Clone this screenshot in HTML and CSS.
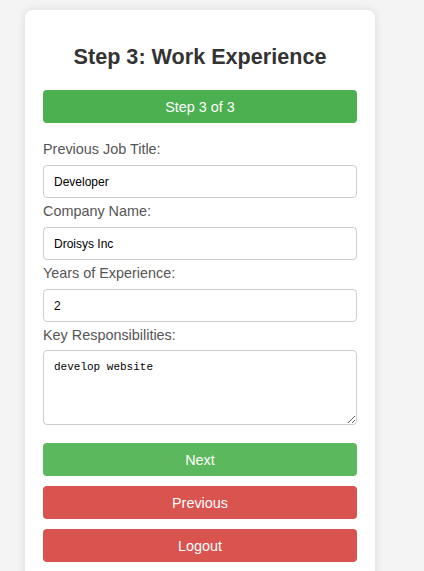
FILE: index.html
```html
<!DOCTYPE html>
<html lang="en">
<head>
<meta charset="utf-8">
<title>Step 3: Work Experience</title>
<link rel="stylesheet" href="styles.css">
</head>
<body>
<div class="card">
  <h2 class="title">Step 3: Work Experience</h2>
  <div class="progress">Step 3 of 3</div>
  <form class="form">
    <label class="label" for="job">Previous Job Title:</label>
    <input class="field" id="job" type="text" value="Developer">
    <label class="label" for="company">Company Name:</label>
    <input class="field" id="company" type="text" value="Droisys Inc">
    <label class="label" for="years">Years of Experience:</label>
    <input class="field" id="years" type="number" value="2">
    <label class="label" for="resp">Key Responsibilities:</label>
    <textarea class="area" id="resp">develop website</textarea>
    <button class="btn btn-next" type="button">Next</button>
    <button class="btn btn-danger" type="button">Previous</button>
    <button class="btn btn-danger" type="button">Logout</button>
  </form>
</div>
</body>
</html>
```
FILE: styles.css
```css
html, body {
  margin: 0;
  padding: 0;
  background: #f4f4f4;
  font-family: "Liberation Sans", Arial, sans-serif;
}

.card {
  box-sizing: border-box;
  width: 350px;
  margin: 10px 0 0 25px;
  padding: 18px 18px 20px;
  background: #ffffff;
  border-radius: 8px;
  box-shadow: 0 0 10px rgba(0, 0, 0, 0.1);
  min-height: 600px;
}

.title {
  margin: 16px 0 21px;
  font-size: 21.6px;
  line-height: 25px;
  font-weight: bold;
  color: #333333;
  text-align: center;
}

.progress {
  height: 33px;
  display: flex;
  align-items: center;
  justify-content: center;
  background: #4caf50;
  color: #ffffff;
  font-size: 14.4px;
  border-radius: 4px;
  margin-bottom: 18px;
}

.form {
  display: flex;
  flex-direction: column;
}

.label {
  display: block;
  font-size: 14.4px;
  line-height: 17px;
  color: #555555;
  margin-bottom: 7px;
}

.field {
  box-sizing: border-box;
  height: 33px;
  width: 100%;
  margin: 0 0 5px;
  padding: 0 10px;
  border: 1px solid #cccccc;
  border-radius: 4px;
  font-family: "Liberation Sans", Arial, sans-serif;
  font-size: 12px;
  color: #000000;
  background: #ffffff;
}

.area {
  box-sizing: border-box;
  height: 75px;
  width: 100%;
  margin: -1px 0 18px;
  padding: 10px;
  border: 1px solid #cccccc;
  border-radius: 4px;
  font-family: "Liberation Mono", monospace;
  font-size: 11px;
  line-height: 13px;
  color: #000000;
  background: #ffffff;
}

.btn {
  box-sizing: border-box;
  height: 33px;
  width: 100%;
  margin: 0 0 10px;
  border: none;
  border-radius: 4px;
  color: #ffffff;
  font-family: "Liberation Sans", Arial, sans-serif;
  font-size: 14.4px;
  cursor: pointer;
}

.btn-next {
  background: #5cb85c;
}

.btn-danger {
  background: #d9534f;
}
```
